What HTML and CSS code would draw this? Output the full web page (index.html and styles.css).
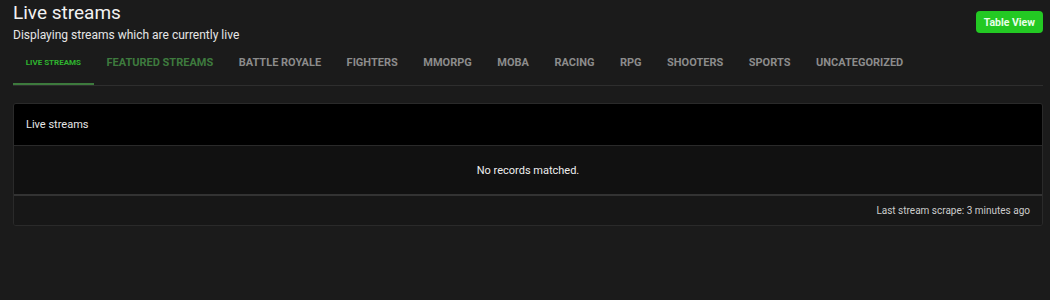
FILE: index.html
```html
<!DOCTYPE html>
<html lang="en">

<head>
  <meta charset="UTF-8" />
  <title>Live streams</title>
  <link rel="stylesheet" href="styles.css">
</head>

<body>
  <header class="page-header">
    <div>
      <h1>Live streams</h1>
      <p class="subtitle">Displaying streams which are currently live</p>
    </div>
    <button class="btn-table">Table View</button>
  </header>

  <nav class="tabs">
    <a class="tab active">Live streams</a>
    <a class="tab featured">Featured streams</a>
    <a class="tab">Battle royale</a>
    <a class="tab">Fighters</a>
    <a class="tab">MMORPG</a>
    <a class="tab">MOBA</a>
    <a class="tab">Racing</a>
    <a class="tab">RPG</a>
    <a class="tab">Shooters</a>
    <a class="tab">Sports</a>
    <a class="tab">Uncategorized</a>
  </nav>

  <section class="card">
    <div class="card-header">Live streams</div>
    <div class="card-body">No records matched.</div>
    <div class="card-footer">Last stream scrape: 3 minutes ago</div>
  </section>
</body>

</html>
```

FILE: styles.css
```css
* {
  font-family: Roboto, "Liberation Sans", sans-serif;
  box-sizing: border-box;
}

body {
  margin: 0;
  padding: 0 7px 0 13px;
  background-color: #1b1b1b;
  color: #ddd;
}

.page-header {
  display: flex;
  justify-content: space-between;
  align-items: flex-start;
  padding-top: 2px;
}

h1 {
  margin: 0;
  font-size: 19px;
  font-weight: 400;
  color: #f2f2f2;
  line-height: 22px;
}

.subtitle {
  margin: 4px 0 0;
  font-size: 12px;
  color: #e6e6e6;
  line-height: 14px;
}

.btn-table {
  margin-top: 9px;
  padding: 0 8px;
  height: 22px;
  background-color: #23c923;
  color: #e8ffe8;
  border: none;
  border-radius: 4px;
  font-size: 10.5px;
  font-weight: 700;
}

/* Tabs */
.tabs {
  display: flex;
  margin-top: 8px;
  border-bottom: 1px solid #2e2e2e;
}

.tab {
  padding: 6px 12.75px 14px;
  font-size: 11px;
  font-weight: 700;
  text-transform: uppercase;
  color: #8c8c8c;
  line-height: 13px;
  border-bottom: 2px solid transparent;
}

.tab.active {
  font-size: 8px;
  color: #2fb52f;
  border-bottom-color: #3d7a3d;
  display: flex;
  align-items: center;
}

.tab.featured {
  color: #3e7a3e;
}

/* Card */
.card {
  margin-top: 17px;
  border: 1px solid #2a2a2a;
  border-radius: 3px;
  overflow: hidden;
}

.card-header {
  background: #000;
  padding: 14px 12px;
  font-size: 11px;
  color: #e6e6e6;
  border-bottom: 1px solid #2a2a2a;
}

.card-body {
  background: #111;
  height: 50px;
  display: flex;
  align-items: center;
  justify-content: center;
  font-size: 11px;
  color: #eee;
  border-bottom: 2px solid #333;
}

.card-footer {
  background: #171717;
  padding: 9px 12px 9px;
  text-align: right;
  font-size: 10px;
  color: #ccc;
}
```
